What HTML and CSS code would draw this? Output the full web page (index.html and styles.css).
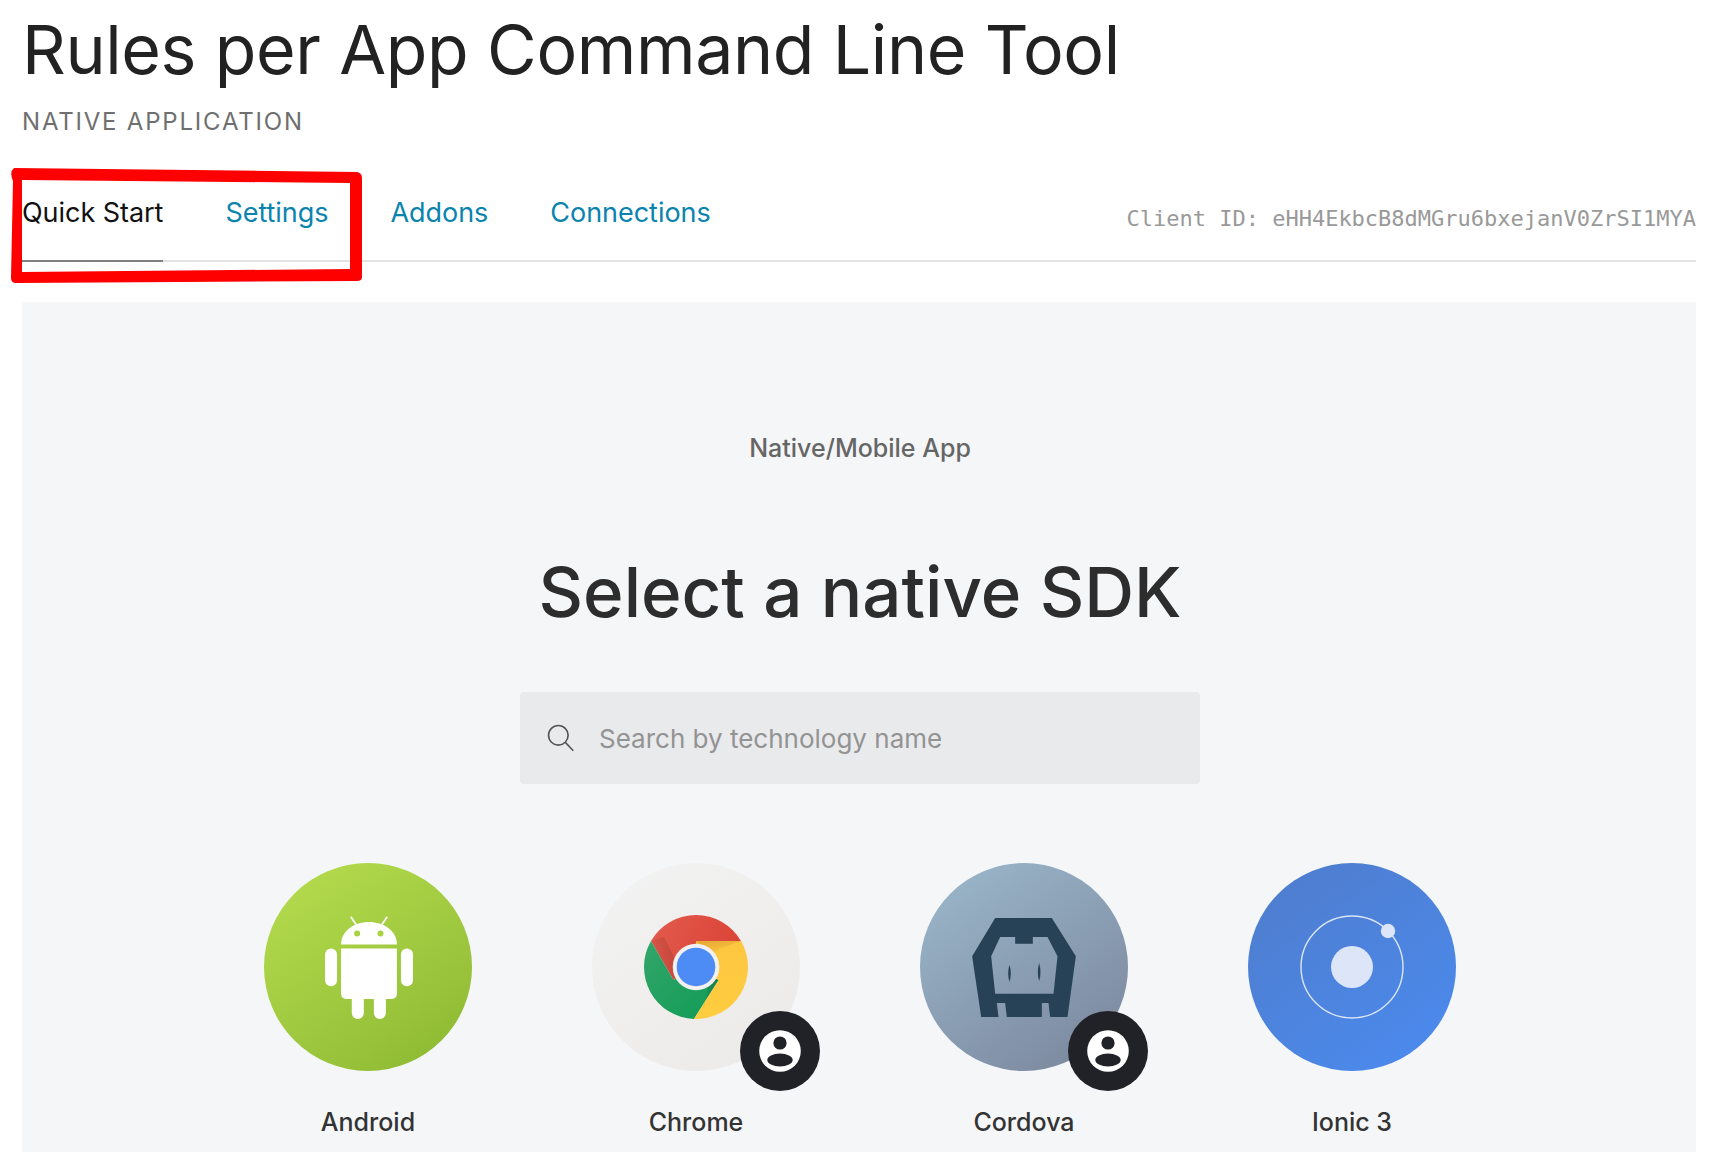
FILE: index.html
```html
<!DOCTYPE html>
<html lang="en">
<head>
<meta charset="utf-8">
<title>Rules per App Command Line Tool</title>
<link rel="stylesheet" href="styles.css">
</head>
<body>
<main class="page">
  <header class="app-head">
    <h1 class="app-title">Rules per App Command Line Tool</h1>
    <div class="app-type">NATIVE APPLICATION</div>
  </header>
  <nav class="tabs">
    <ul class="tab-list">
      <li class="tab tab-active">Quick Start</li>
      <li class="tab">Settings</li>
      <li class="tab">Addons</li>
      <li class="tab">Connections</li>
    </ul>
    <div class="client-id">Client ID: eHH4EkbcB8dMGru6bxejanV0ZrSI1MYA</div>
  </nav>
  <section class="panel">
    <div class="eyebrow">Native/Mobile App</div>
    <h2 class="panel-title">Select a native SDK</h2>
    <div class="search">
      <svg class="search-icon" viewBox="0 0 32 32" aria-hidden="true"><circle cx="12.5" cy="12.5" r="10.8"/><path d="M20.5 20.5 L29 29.5"/></svg>
      <span class="search-text">Search by technology name</span>
    </div>
    <div class="sdk-grid">
      <div class="sdk">
        <div class="sdk-circle android">
          <svg class="logo-android" viewBox="75 50 263 308" aria-hidden="true">
            <path class="w" d="M123 135 C123 95 162 68 206.500 68 C251 68 290 95 290 135 Z"/>
            <path class="ws" d="M152 52 L171 80 M261 52 L242 80"/>
            <circle class="eye" cx="171" cy="102" r="9"/><circle class="eye" cx="241" cy="102" r="9"/>
            <path class="w" d="M123 147 H290 V282 Q290 298 274 298 H139 Q123 298 123 282 Z"/>
            <rect class="w" x="75" y="147" width="36" height="113" rx="18"/>
            <rect class="w" x="302" y="147" width="36" height="113" rx="18"/>
            <rect class="w" x="155" y="280" width="36" height="78" rx="18"/>
            <rect class="w" x="221" y="280" width="36" height="78" rx="18"/>
          </svg>
        </div>
        <div class="sdk-name">Android</div>
      </div>
      <div class="sdk">
        <div class="sdk-circle chrome">
          <svg class="logo-chrome" viewBox="0 0 104 104" aria-hidden="true">
            <defs>
              <linearGradient id="cr" x1="0" y1="0" x2="1" y2="0.3"><stop offset="0" stop-color="#e15b4e"/><stop offset="1" stop-color="#db4437"/></linearGradient>
              <linearGradient id="cg" x1="0" y1="0" x2="0.8" y2="1"><stop offset="0" stop-color="#33a669"/><stop offset="1" stop-color="#149c58"/></linearGradient>
              <linearGradient id="cy" x1="0" y1="0" x2="0" y2="1"><stop offset="0" stop-color="#fdc63f"/><stop offset="1" stop-color="#ffcd40"/></linearGradient>
              <linearGradient id="sr" x1="1" y1="0" x2="0" y2="0.5"><stop offset="0" stop-color="#a33f33" stop-opacity=".65"/><stop offset="1" stop-color="#a33f33" stop-opacity="0"/></linearGradient>
              <linearGradient id="sy" x1="0" y1="0" x2="0.6" y2="1"><stop offset="0" stop-color="#d99a30" stop-opacity=".7"/><stop offset="1" stop-color="#d99a30" stop-opacity="0"/></linearGradient>
              <linearGradient id="sg" x1="1" y1="0" x2="0.2" y2="0.6"><stop offset="0" stop-color="#14643c" stop-opacity=".6"/><stop offset="1" stop-color="#14643c" stop-opacity="0"/></linearGradient>
            </defs>
            <path fill="url(#cr)" d="M7 26 A52 52 0 0 1 97 26 H52 V52 L29.500 65 Z"/>
            <path fill="url(#cg)" d="M7 26 L29.500 65 L52 52 L74.500 65 L50 104 A52 52 0 0 1 7 26 Z"/>
            <path fill="url(#cy)" d="M97 26 H52 V52 L74.500 65 L50 104 A52 52 0 0 0 97 26 Z"/>
            <path fill="url(#sr)" d="M7 26 L29.500 65 L34 50 L20 22 Z"/>
            <path fill="url(#sy)" d="M52 26 H97 L75 34 L66 40 Z"/>
            <path fill="url(#sg)" d="M74.500 65 L50 104 L58 104 L66 62 Z"/>
            <circle cx="52" cy="52" r="23.300" fill="#f1f1f1"/>
            <circle cx="52" cy="52" r="19.300" fill="#4e8cf5"/>
          </svg>
          <span class="badge">
            <svg class="badge-icon" viewBox="0 0 42 42" aria-hidden="true"><circle cx="21" cy="21" r="20.800" fill="#fff"/><circle cx="21" cy="13" r="6.600" fill="#212227"/><ellipse cx="21" cy="30" rx="12.700" ry="6.400" fill="#212227"/></svg>
          </span>
        </div>
        <div class="sdk-name sdk-name-wrap">Chrome<br>Extension</div>
      </div>
      <div class="sdk">
        <div class="sdk-circle cordova">
          <svg class="logo-cordova" viewBox="66 55 311 297" aria-hidden="true">
            <path fill="#274256" fill-rule="evenodd" d="M135 55 H305 L377 170 L352 352 H300 L295 310 H275 V352 H170 L165 310 H140 L145 352 H93 L66 170 Z M150 112 L123 170 L135 282 H310 L322 170 L292 112 H248 V132 H195 V112 Z"/>
            <path fill="#274256" d="M178 195 Q186 221 178 247 Q170 221 178 195 Z M267 190 Q275 218 267 245 Q259 218 267 190 Z"/>
          </svg>
          <span class="badge">
            <svg class="badge-icon" viewBox="0 0 42 42" aria-hidden="true"><circle cx="21" cy="21" r="20.800" fill="#fff"/><circle cx="21" cy="13" r="6.600" fill="#212227"/><ellipse cx="21" cy="30" rx="12.700" ry="6.400" fill="#212227"/></svg>
          </span>
        </div>
        <div class="sdk-name">Cordova</div>
      </div>
      <div class="sdk">
        <div class="sdk-circle ionic">
          <svg class="logo-ionic" viewBox="0 0 104 104" aria-hidden="true">
            <circle class="ring" cx="52" cy="52" r="51"/>
            <circle class="dot" cx="52" cy="52" r="21"/>
            <circle class="dot" cx="88" cy="16" r="7.200"/>
          </svg>
        </div>
        <div class="sdk-name">Ionic 3</div>
      </div>
    </div>
  </section>
  <svg class="annotation" viewBox="0 0 380 300" aria-hidden="true">
    <path fill="#ff0000" fill-rule="evenodd" d="M14 168 L357 172 Q362 173 362 178 L362 277 Q362 281 357 281 L16 283 Q11 283 11 278 L13 181 Q9 172 14 168 Z M22 180 L22 272 L350 269 L350 183 Z"/>
  </svg>
</main>
</body>
</html>
```
FILE: styles.css
```css
html, body { margin: 0; padding: 0; height: 100%; overflow: hidden; background: #fff; }
body { font-family: Inter, "Liberation Sans", sans-serif; color: #222; }
.page { position: relative; height: 1152px; overflow: hidden; padding: 9px 32px 0 22px; box-sizing: border-box; }
.app-title { margin: 0; font-size: 68px; line-height: 80px; font-weight: 400; color: #222; letter-spacing: -0.38px; }
.app-type { margin-top: 19px; font-size: 24px; line-height: 28px; font-weight: 400; color: #6f6f6f; letter-spacing: 1.8px; }
.tabs { margin-top: 60px; display: flex; justify-content: space-between; align-items: stretch; height: 64px; border-bottom: 2px solid #e3e3e3; }
.tab-list { list-style: none; margin: 0; padding: 0; display: flex; gap: 62px; }
.tab { font-size: 27px; line-height: 34px; height: 64px; box-sizing: border-box; color: #0a84ae; white-space: nowrap; letter-spacing: -0.04px; }
.tab-active { color: #111; border-bottom: 2px solid #808080; height: 66px; }
.client-id { font-family: "DejaVu Sans Mono", monospace; font-size: 22px; line-height: 26px; color: #999; padding-top: 10px; }
.panel { margin-top: 40px; height: 900px; background: #f5f6f8; padding: 128px 0 0 2px; box-sizing: border-box; display: flex; flex-direction: column; align-items: center; }
.eyebrow { font-size: 25px; line-height: 36px; font-weight: 500; color: #666; }
.panel-title { margin: 84px 0 0; font-size: 69px; line-height: 84px; font-weight: 500; color: #2d2d2d; }
.search { margin-top: 58px; width: 680px; height: 92px; box-sizing: border-box; padding-left: 27px; display: flex; align-items: center; gap: 23px; background: #e9eaec; border-radius: 4px; }
.search-icon { width: 29px; height: 29px; fill: none; stroke: #555; stroke-width: 1.8; }
.search-text { font-size: 26px; color: #939393; }
.sdk-grid { margin-top: 79px; display: flex; gap: 120px; }
.sdk { width: 208px; display: flex; flex-direction: column; align-items: center; }
.sdk-circle { position: relative; width: 208px; height: 208px; border-radius: 50%; display: flex; align-items: center; justify-content: center; }
.sdk-name { margin-top: 33px; font-size: 25px; line-height: 36px; font-weight: 500; color: #333; text-align: center; }
.sdk-name-wrap { margin-top: 30px; line-height: 42px; }
.android { background: linear-gradient(145deg, #b8de50, #8ab731); }
.chrome { background: linear-gradient(145deg, #f3f3f3, #eceae8); }
.cordova { background: linear-gradient(145deg, #9cb9cd, #79849a); }
.ionic { background: linear-gradient(145deg, #4f7ccb, #4b8bf0); }
.logo-android { width: 88px; height: 103px; margin-left: 1px; }
.logo-android .w { fill: #fff; }
.logo-android .ws { stroke: #fff; stroke-width: 5; fill: none; }
.logo-android .eye { fill: #a9d244; }
.logo-chrome { width: 104px; height: 104px; }
.logo-cordova { width: 104px; height: 99px; }
.logo-ionic { width: 104px; height: 104px; overflow: visible; }
.logo-ionic .ring { fill: none; stroke: #dce6f8; stroke-width: 1.400; }
.logo-ionic .dot { fill: #dce6f8; }
.badge { position: absolute; right: -20px; bottom: -20px; width: 80px; height: 80px; border-radius: 50%; background: #212227; display: flex; align-items: center; justify-content: center; }
.badge-icon { width: 42px; height: 42px; }
.annotation { position: absolute; left: 0; top: 0; width: 380px; height: 300px; filter: blur(0.7px); pointer-events: none; }
```
